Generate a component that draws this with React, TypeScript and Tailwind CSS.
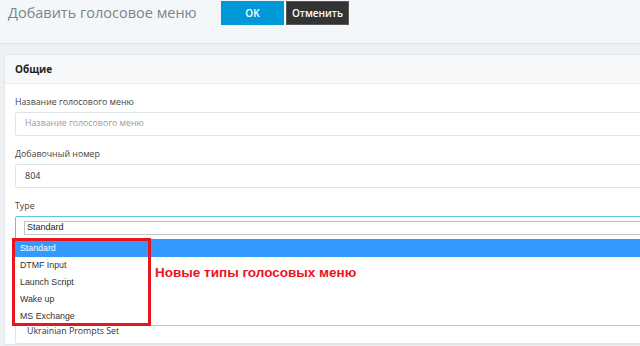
import React from 'react';

const ui = { fontFamily: '"Open Sans", "Noto Sans", sans-serif' };
const win = { fontFamily: '"Liberation Sans", Arial, sans-serif' };

const typeOptions = ['Standard', 'DTMF Input', 'Launch Script', 'Wake up', 'MS Exchange'];

function Field({ label, children }: { label: string; children: React.ReactNode }) {
  return (
    <div className="mb-[11px]">
      <div className="h-[14px] mb-[3px] text-[8.8px] leading-[14px] text-[#444]">{label}</div>
      {children}
    </div>
  );
}

export default function App() {
  return (
    <div className="w-[640px] h-[346px] overflow-hidden bg-[#eef1f3]" style={ui}>
      {/* Заголовок */}
      <div className="h-[44px] bg-[#f4f7f9] border-b border-[#e2e6e9] flex items-start pt-[1px]">
        <h1 className="w-[221px] pl-[8px] h-[24px] text-[14.5px] leading-[24px] text-[#7f8386] font-normal">
          Добавить голосовое меню
        </h1>
        <button className="w-[63px] h-[24px] bg-[#0099d7] text-white text-[10px] font-semibold">OK</button>
        <button className="ml-[2px] w-[63px] h-[24px] bg-[#333333] border border-[#5a5a5a] text-white text-[10px] font-semibold">
          Отменить
        </button>
      </div>

      {/* Карточка */}
      <div className="pl-[4px] pt-[10px]">
        <div className="w-[700px] bg-white border border-[#e3e6e8]">
          <div className="h-[29px] bg-[#f7f8f9] border-b border-[#e9ecee] pl-[10px] flex items-center text-[10px] font-bold text-[#222]">
            Общие
          </div>
          <div className="pl-[10px] pt-[11px]">
            <Field label="Название голосового меню">
              <div className="h-[24px] border border-[#e0e4e7] rounded-[2px] pl-[9px] flex items-center text-[8.8px] text-[#9a9a9a]">
                Название голосового меню
              </div>
            </Field>
            <Field label="Добавочный номер">
              <div className="h-[24px] border border-[#e0e4e7] rounded-[2px] pl-[9px] flex items-center text-[9px] text-[#333]">
                804
              </div>
            </Field>
            <Field label="Type">
              <div className="relative h-[24px] border border-[#66c3e6] rounded-[2px] pl-[8px] pt-[4px]">
                <div className="h-[14px] border border-[#c4c4c4] pl-[2px] flex items-center text-[9px] text-[#222]" style={win}>
                  Standard
                </div>
                {/* Выпадающий список */}
                <div className="absolute left-[-2px] top-[22px] w-[700px] bg-white border-t border-[#5b8fb9] border-b border-b-[#c4c4c4] z-10" style={win}>
                  {typeOptions.map((opt, i) => (
                    <div
                      key={opt}
                      className={
                        i === 0
                          ? 'h-[17px] pl-[6px] flex items-center text-[8.8px] bg-[#3399ff] text-white'
                          : 'h-[17px] pl-[6px] flex items-center text-[8.8px] text-[#333]'
                      }
                    >
                      {opt}
                    </div>
                  ))}
                  <div className="absolute left-[-2px] top-[-2px] w-[139px] h-[88px] border-[3px] border-[#e8141f]" />
                  <div className="absolute left-[141px] top-[24px] text-[13.5px] leading-[18px] font-bold text-[#e8141f]">
                    Новые типы голосовых меню
                  </div>
                </div>
              </div>
            </Field>
            <div className="h-[52px]" />
            <div className="h-[14px] mb-[3px]" />
            <div className="h-[24px] border border-[#e0e4e7] rounded-[2px] pl-[11px] flex items-center text-[8.8px] text-[#333]">
              Ukrainian Prompts Set
            </div>
          </div>
        </div>
      </div>
    </div>
  );
}
